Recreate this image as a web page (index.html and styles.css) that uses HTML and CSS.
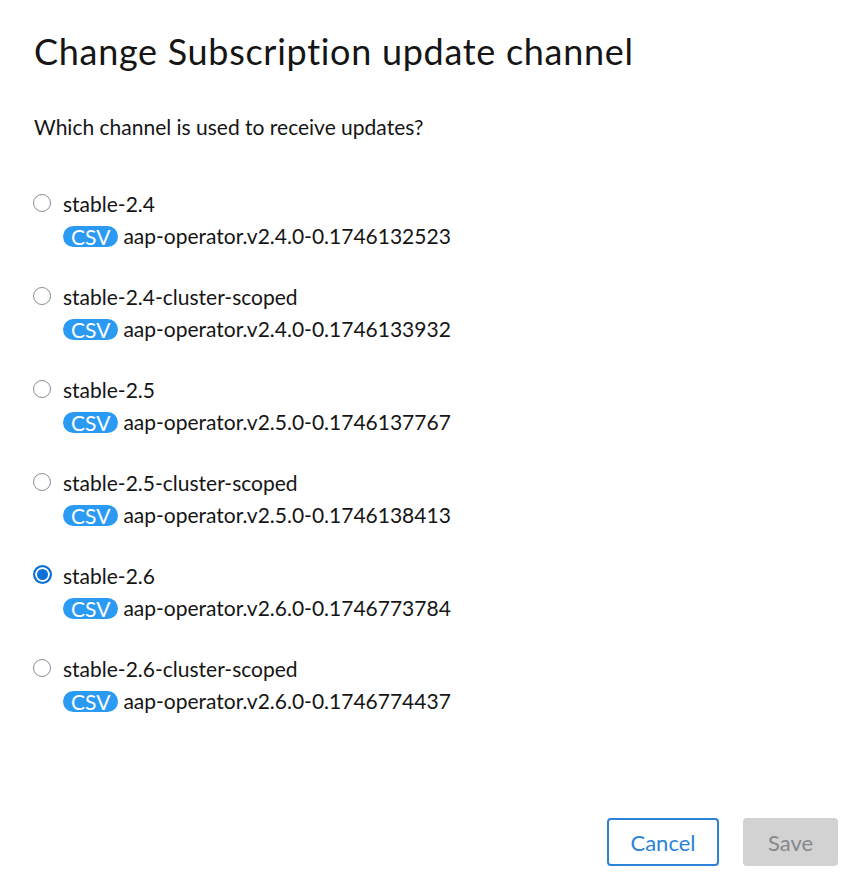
FILE: index.html
```html
<!DOCTYPE html>
<html lang="en">
<head>
<meta charset="utf-8">
<title>Change Subscription update channel</title>
<link rel="stylesheet" href="styles.css">
</head>
<body>
<div class="modal">
  <h1 class="modal-title">Change Subscription update channel</h1>
  <p class="modal-desc">Which channel is used to receive updates?</p>
  <div class="channel-list">
    <label class="channel">
      <span class="radio"></span>
      <span class="channel-name">stable-2.4</span>
      <span class="channel-csv"><span class="badge">CSV</span>aap-operator.v2.4.0-0.1746132523</span>
    </label>
    <label class="channel">
      <span class="radio"></span>
      <span class="channel-name">stable-2.4-cluster-scoped</span>
      <span class="channel-csv"><span class="badge">CSV</span>aap-operator.v2.4.0-0.1746133932</span>
    </label>
    <label class="channel">
      <span class="radio"></span>
      <span class="channel-name">stable-2.5</span>
      <span class="channel-csv"><span class="badge">CSV</span>aap-operator.v2.5.0-0.1746137767</span>
    </label>
    <label class="channel">
      <span class="radio"></span>
      <span class="channel-name">stable-2.5-cluster-scoped</span>
      <span class="channel-csv"><span class="badge">CSV</span>aap-operator.v2.5.0-0.1746138413</span>
    </label>
    <label class="channel">
      <span class="radio radio-checked"></span>
      <span class="channel-name">stable-2.6</span>
      <span class="channel-csv"><span class="badge">CSV</span>aap-operator.v2.6.0-0.1746773784</span>
    </label>
    <label class="channel">
      <span class="radio"></span>
      <span class="channel-name">stable-2.6-cluster-scoped</span>
      <span class="channel-csv"><span class="badge">CSV</span>aap-operator.v2.6.0-0.1746774437</span>
    </label>
  </div>
  <div class="modal-footer">
    <button class="btn btn-secondary" type="button">Cancel</button>
    <button class="btn btn-disabled" type="button" disabled>Save</button>
  </div>
</div>
</body>
</html>
```

FILE: styles.css
```css
* { box-sizing: border-box; }

html, body {
  margin: 0;
  padding: 0;
  background: #ffffff;
}

body {
  font-family: Lato, "Open Sans", "Liberation Sans", sans-serif;
  color: #151515;
}

.modal {
  height: 886px;
  display: flex;
  flex-direction: column;
  padding: 31px 21px 20px 34px;
}

.modal-title {
  margin: 0;
  font-size: 36px;
  line-height: 40px;
  letter-spacing: 0.7px;
  font-weight: 400;
  color: #151515;
}

.modal-desc {
  margin: 42px 0 0;
  font-size: 21px;
  line-height: 28px;
  color: #151515;
}

.channel-list {
  display: flex;
  flex-direction: column;
  gap: 33px;
  margin-top: 49px;
}

.channel {
  display: grid;
  grid-template-columns: 29px 1fr;
  row-gap: 4px;
  font-size: 21px;
  line-height: 28px;
}

.radio {
  grid-row: 1;
  grid-column: 1;
  align-self: center;
  width: 18px;
  height: 18px;
  border: 1px solid #8a8d90;
  border-radius: 50%;
  background: #fff;
  margin-left: -1px;
  margin-top: -3px;
}

.radio-checked {
  border: 2px solid #0b6fd8;
  box-shadow: inset 0 0 0 2px #fff;
  background: #0b6fd8;
  width: 19px;
  height: 19px;
}

.channel-name {
  grid-row: 1;
  grid-column: 2;
}

.channel-csv {
  grid-row: 2;
  grid-column: 2;
  display: flex;
  align-items: center;
  gap: 5px;
}

.badge {
  display: inline-block;
  height: 21px;
  line-height: 21px;
  padding: 0 8px;
  border-radius: 11px;
  background: #2b9af3;
  color: #ffffff;
  font-size: 21px;
}

.modal-footer {
  margin-top: auto;
  display: flex;
  justify-content: flex-end;
  gap: 24px;
}

.btn {
  height: 48px;
  border-radius: 4px;
  font-family: inherit;
  font-size: 22px;
  padding: 0;
  background: #fff;
}

.btn-secondary {
  width: 112px;
  border: 2px solid #2b83d8;
  color: #2b83d8;
}

.btn-disabled {
  width: 95px;
  border: none;
  background: #d2d2d2;
  color: #85888c;
}
```
